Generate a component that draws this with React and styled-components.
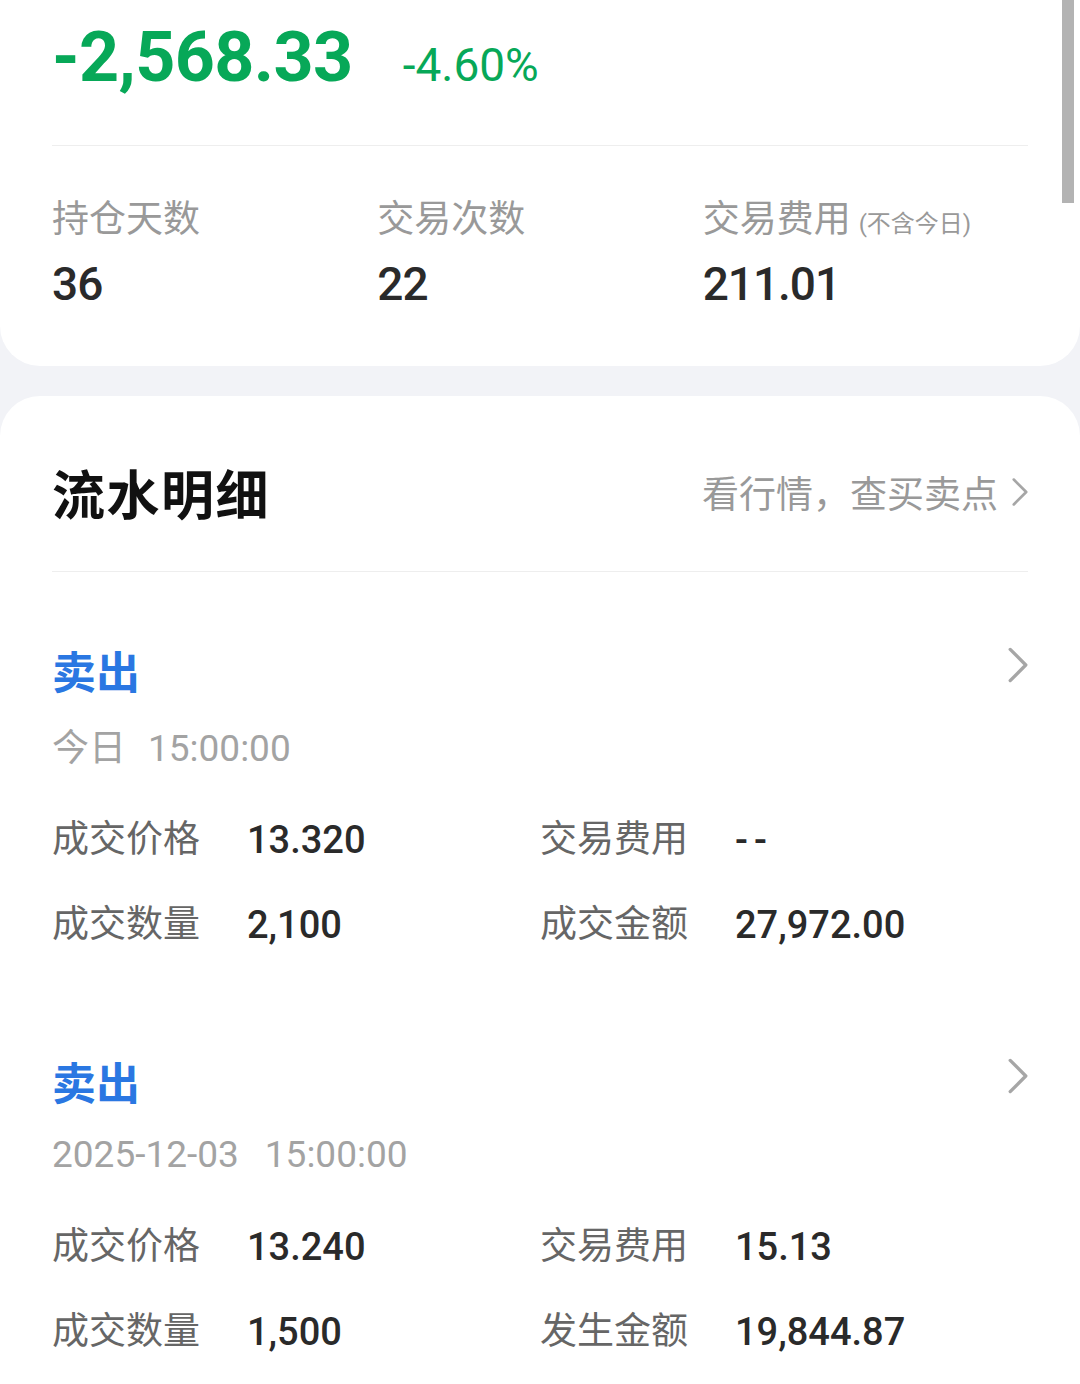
import React from "react";
import styled, { createGlobalStyle } from "styled-components";

const GlobalStyle = createGlobalStyle`
  html, body {
    margin: 0;
    padding: 0;
    background: #f2f3f7;
    font-family: Roboto, "Noto Sans CJK SC", "Noto Sans", sans-serif;
  }
`;

const Page = styled.div`
  position: relative;
  width: 1080px;
  min-height: 1384px;
  overflow: hidden;
`;

const ScrollThumb = styled.div`
  position: absolute;
  top: 0;
  right: 6px;
  width: 12px;
  height: 203px;
  background: #b3b3b3;
`;

const SummaryCard = styled.section`
  background: #fff;
  border-radius: 0 0 40px 40px;
  padding: 0 52px 56px;
`;

const ProfitRow = styled.div`
  display: flex;
  align-items: baseline;
  gap: 50px;
  height: 146px;
  box-sizing: border-box;
  padding-top: 16px;
  border-bottom: 1px solid #eeeeee;
  color: #07a858;
`;

const ProfitValue = styled.span`
  font-size: 70px;
  font-weight: 700;
  letter-spacing: -0.6px;
`;

const ProfitRate = styled.span`
  font-size: 46px;
  font-weight: 400;
`;

const StatGrid = styled.div`
  display: grid;
  grid-template-columns: repeat(3, 1fr);
  padding-top: 52px;
`;

const Stat = styled.div`
  display: flex;
  flex-direction: column;
  gap: 16px;
`;

const StatLabel = styled.div`
  font-size: 37px;
  line-height: 44px;
  height: 44px;
  color: #999;
  white-space: nowrap;
`;

const StatNote = styled.span`
  font-size: 24px;
  line-height: 1;
  margin-left: 8px;
`;

const StatValue = styled.div`
  font-size: 46px;
  line-height: 52px;
  font-weight: 500;
  color: #2a2a2a;
  letter-spacing: -1px;
`;

const DetailCard = styled.section`
  background: #fff;
  border-radius: 40px 40px 0 0;
  margin-top: 30px;
  padding: 0 52px 40px;
`;

const DetailHeader = styled.div`
  display: flex;
  align-items: center;
  justify-content: space-between;
  height: 176px;
  box-sizing: border-box;
  padding-top: 16px;
  border-bottom: 1px solid #eeeeee;
`;

const Title = styled.h2`
  margin: 0;
  font-size: 53px;
  font-weight: 700;
  color: #111;
  letter-spacing: 1.5px;
`;

const MarketLink = styled.div`
  display: flex;
  align-items: center;
  gap: 14px;
  font-size: 37px;
  color: #999;
`;

const Record = styled.div`
  padding: 74px 0 33px;
`;

const RecordHead = styled.div`
  display: flex;
  justify-content: space-between;
  align-items: center;
`;

const Side = styled.div`
  font-size: 44px;
  line-height: 56px;
  font-weight: 700;
  color: ${(p) => p.color || "#2a77e2"};
`;

const ChevronWrap = styled.span`
  display: flex;
  margin-bottom: 18px;
`;

const Time = styled.div`
  margin-top: ${(p) => p.gap}px;
  font-size: 37px;
  line-height: 44px;
  color: #a3a3a3;
  span + span {
    margin-left: ${(p) => p.spacing}px;
  }
`;

const Fields = styled.div`
  display: grid;
  grid-template-columns: 1fr 1fr;
  row-gap: 35px;
  margin-top: ${(p) => p.gap}px;
`;

const Field = styled.div`
  display: grid;
  grid-template-columns: 195px 1fr;
  align-items: center;
  line-height: 50px;
`;

const FieldLabel = styled.span`
  font-size: 37px;
  color: #666;
`;

const FieldValue = styled.span`
  font-size: 38px;
  font-weight: 500;
  color: #2a2a2a;
  letter-spacing: ${(p) => (p.dash ? "6px" : "0")};
`;

const Chevron = ({ w = 18, h = 32, color = "#a6a6a6" }) => (
  <svg width={w} height={h} viewBox="0 0 18 32" fill="none">
    <path d="M2 2 L16 16 L2 30" stroke={color} strokeWidth="3" strokeLinecap="round" strokeLinejoin="round" />
  </svg>
);

const records = [
  {
    side: "卖出",
    time: ["今日", "15:00:00"],
    gap: 25,
    spacing: 22,
    fieldsGap: 44,
    fields: [
      ["成交价格", "13.320"],
      ["交易费用", "--"],
      ["成交数量", "2,100"],
      ["成交金额", "27,972.00"],
    ],
  },
  {
    side: "卖出",
    time: ["2025-12-03", "15:00:00"],
    gap: 20,
    spacing: 26,
    fieldsGap: 45,
    fields: [
      ["成交价格", "13.240"],
      ["交易费用", "15.13"],
      ["成交数量", "1,500"],
      ["发生金额", "19,844.87"],
    ],
  },
];

export default function App() {
  return (
    <Page>
      <GlobalStyle />
      <SummaryCard>
        <ProfitRow>
          <ProfitValue>-2,568.33</ProfitValue>
          <ProfitRate>-4.60%</ProfitRate>
        </ProfitRow>
        <StatGrid>
          <Stat>
            <StatLabel>持仓天数</StatLabel>
            <StatValue>36</StatValue>
          </Stat>
          <Stat>
            <StatLabel>交易次数</StatLabel>
            <StatValue>22</StatValue>
          </Stat>
          <Stat>
            <StatLabel>
              交易费用<StatNote>(不含今日)</StatNote>
            </StatLabel>
            <StatValue>211.01</StatValue>
          </Stat>
        </StatGrid>
      </SummaryCard>

      <DetailCard>
        <DetailHeader>
          <Title>流水明细</Title>
          <MarketLink>
            看行情，查买卖点
            <Chevron w={16} h={30} />
          </MarketLink>
        </DetailHeader>
        {records.map((r, i) => (
          <Record key={i}>
            <RecordHead>
              <Side>{r.side}</Side>
              <ChevronWrap>
                <Chevron w={20} h={36} />
              </ChevronWrap>
            </RecordHead>
            <Time gap={r.gap} spacing={r.spacing}>
              <span>{r.time[0]}</span>
              <span>{r.time[1]}</span>
            </Time>
            <Fields gap={r.fieldsGap}>
              {r.fields.map(([label, value]) => (
                <Field key={label}>
                  <FieldLabel>{label}</FieldLabel>
                  <FieldValue dash={value === "--"}>{value}</FieldValue>
                </Field>
              ))}
            </Fields>
          </Record>
        ))}
      </DetailCard>
      <ScrollThumb />
    </Page>
  );
}
